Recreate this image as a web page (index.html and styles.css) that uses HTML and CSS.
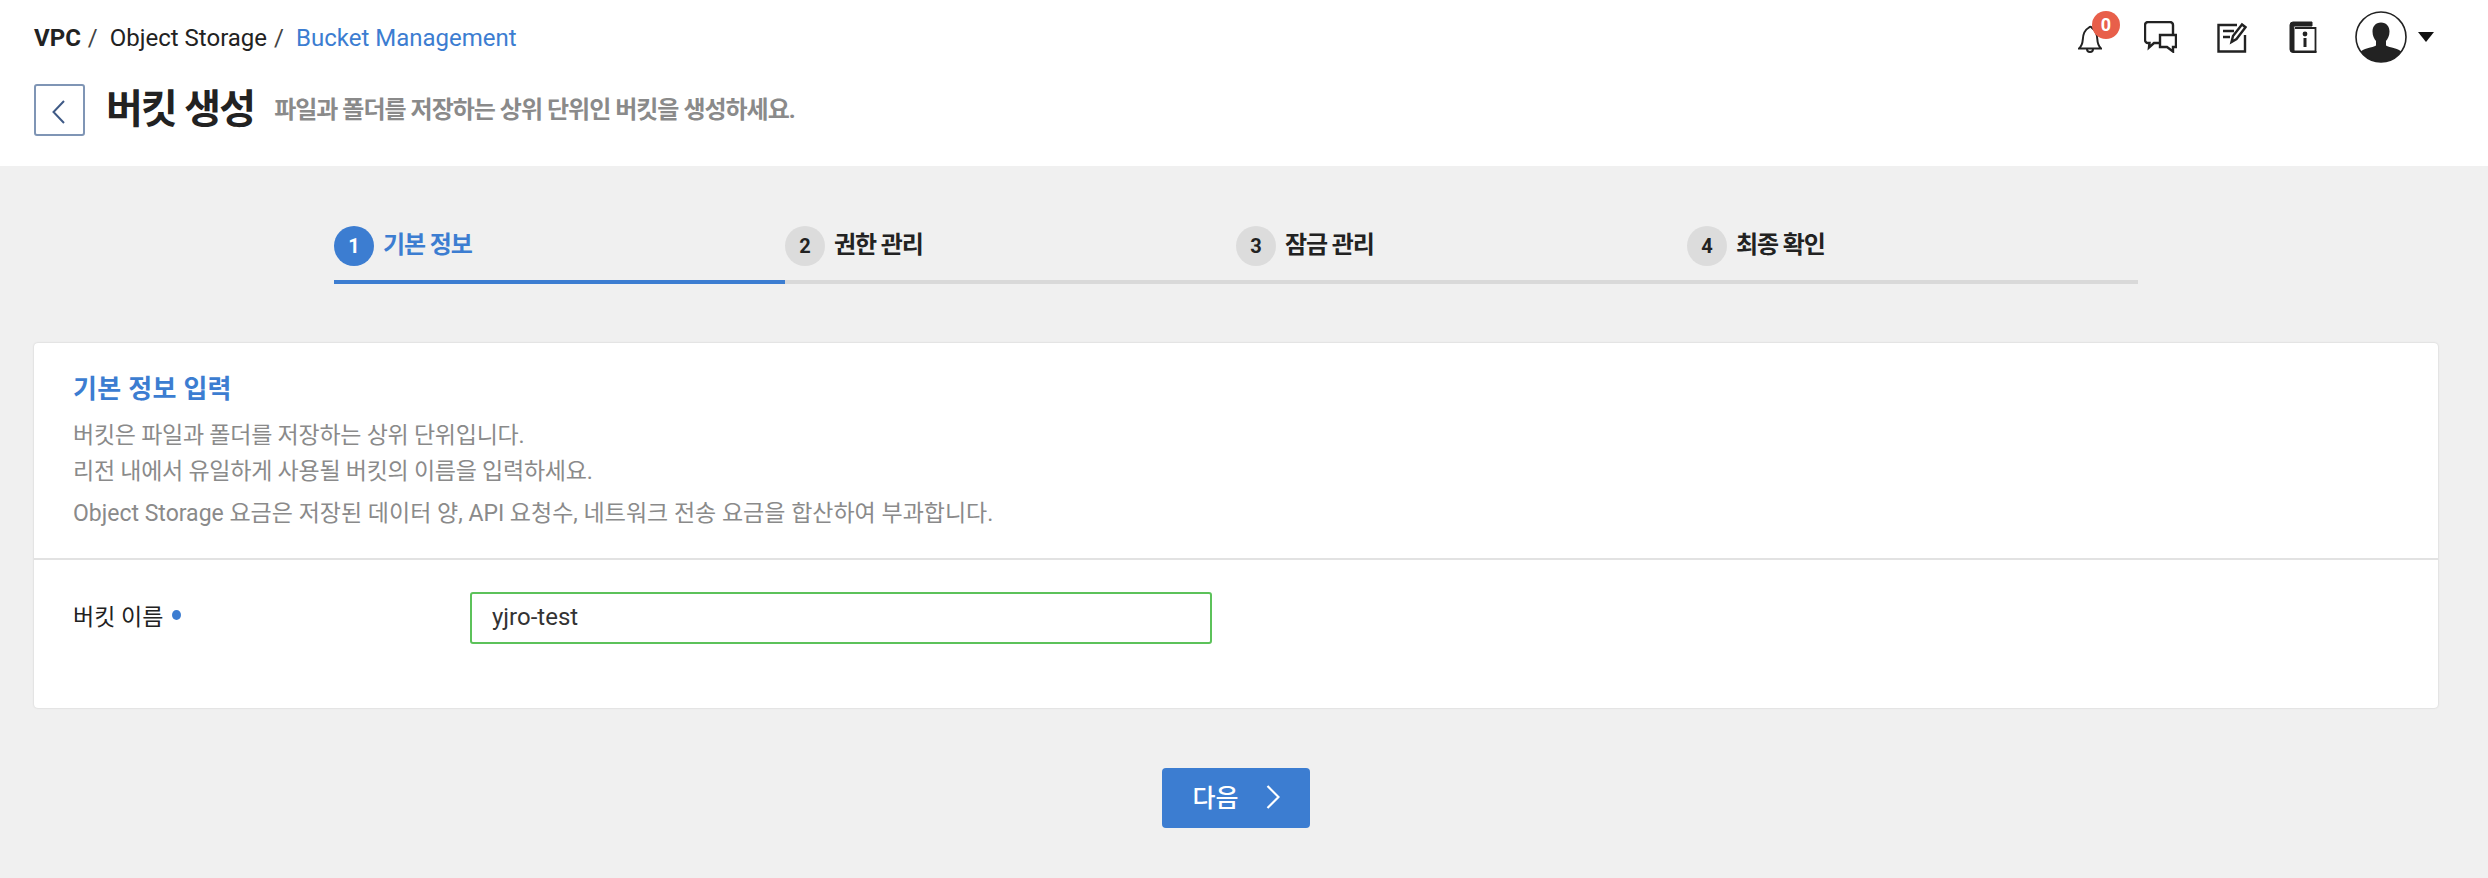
FILE: index.html
```html
<!DOCTYPE html>
<html lang="ko">
<head>
<meta charset="utf-8">
<title>버킷 생성</title>
<link rel="stylesheet" href="styles.css">
</head>
<body>
<header class="header">
  <div class="topbar">
    <nav class="crumbs">
      <span class="crumb-strong">VPC</span><span class="crumb-sep">/</span>
      <span class="crumb">Object Storage</span><span class="crumb-sep">/</span>
      <span class="crumb-active">Bucket Management</span>
    </nav>
    <div class="tools">
      <span class="tool tool-bell">
        <svg width="24" height="28" viewBox="0 0 24 28" fill="none" stroke="#222" stroke-width="2"><path d="M1 23.500c3-2.500 3.500-5 3.800-9C5 9 7.500 4.500 11 2.500 12.500 1 13.500 2 14 3c3 2 5 6 5.300 11 .2 4 1.200 7 3.700 9.500z"/><path d="M9 24a3 3 0 0 0 6 0"/></svg>
        <span class="badge">0</span>
      </span>
      <span class="tool tool-chat">
        <svg width="33" height="32" viewBox="0 0 33 32" fill="none" stroke="#222" stroke-width="2.400"><path d="M16 22H10l-5 4.500 .5-4.500H4a3 3 0 0 1-3-3V4a3 3 0 0 1 3-3h22a3 3 0 0 1 3 3v10"/><path d="M16 14h16v12h-3l0 4.500-6-4.500h-7z"/></svg>
      </span>
      <span class="tool tool-note">
        <svg width="30" height="31" viewBox="0 0 30 31" fill="none" stroke="#222" stroke-width="2.400"><path d="M20 3H1.500v26.500h26.500V13"/><path d="M6 9h11M6 15h7" stroke-width="2.600"/><path d="M14.500 20l1.500-6L25 2.500l3.500 2.700L19.500 17z" fill="#fff"/></svg>
      </span>
      <span class="tool tool-book">
        <svg width="28" height="32" viewBox="0 0 28 32" fill="none"><path d="M4 1h19v4H5a2 2 0 0 0 0 2v22c0 .6 .4 1 1 1h21v1.500H4a3 3 0 0 1-3-3V4a3 3 0 0 1 3-3z" fill="#222" stroke="#222" stroke-width="1"/><path d="M6 7h20.500v24H6" stroke="#222" stroke-width="1.800"/><circle cx="16" cy="13" r="2.400" fill="#222"/><rect x="14.500" y="17" width="3" height="9" fill="#222"/></svg>
      </span>
      <span class="tool-user">
        <svg width="52" height="52" viewBox="0 0 52 52"><defs><clipPath id="avatar-clip"><circle cx="26" cy="26" r="25"/></clipPath></defs><circle cx="26" cy="26" r="25" fill="#fff"/><g clip-path="url(#avatar-clip)" fill="#222"><path d="M26 11.500c5.500 0 8.500 4 8.500 9 0 4-1.700 7.500-3.500 9.500v4.500c3 2 14 3 16 7V52H5V41.500c2-4 13-5 16-7V30c-1.800-2-3.500-5.500-3.500-9.500 0-5 3-9 8.500-9z"/></g><circle cx="26" cy="26" r="25" fill="none" stroke="#222" stroke-width="1.600"/></svg>
        <span class="caret"></span>
      </span>
    </div>
  </div>
  <div class="title-row">
    <button class="back-btn" type="button" aria-label="뒤로">
      <svg class="back-icon" width="13" height="24" viewBox="0 0 13 24" fill="none" stroke="#3f5a86" stroke-width="2"><path d="M12 1L1.500 12 12 23"/></svg>
    </button>
    <h1 class="page-title">버킷 생성</h1>
    <p class="page-sub">파일과 폴더를 저장하는 상위 단위인 버킷을 생성하세요.</p>
  </div>
</header>

<main class="main">
  <ol class="stepper">
    <li class="step step-active"><span class="step-num">1</span><span class="step-label">기본 정보</span></li>
    <li class="step"><span class="step-num">2</span><span class="step-label">권한 관리</span></li>
    <li class="step"><span class="step-num">3</span><span class="step-label">잠금 관리</span></li>
    <li class="step"><span class="step-num">4</span><span class="step-label">최종 확인</span></li>
  </ol>

  <section class="card">
    <div class="card-head">
      <h2 class="card-title">기본 정보 입력</h2>
      <p class="card-desc">버킷은 파일과 폴더를 저장하는 상위 단위입니다.</p>
      <p class="card-desc">리전 내에서 유일하게 사용될 버킷의 이름을 입력하세요.</p>
      <p class="card-desc card-desc-gap">Object Storage 요금은 저장된 데이터 양, API 요청수, 네트워크 전송 요금을 합산하여 부과합니다.</p>
    </div>
    <div class="card-body">
      <label class="field-label" for="bucket-name">버킷 이름<span class="req-dot"></span></label>
      <input class="field-input" id="bucket-name" type="text" value="yjro-test">
    </div>
  </section>

  <div class="actions">
    <button class="next-btn" type="button">
      <span class="next-text">다음</span>
      <svg width="14" height="24" viewBox="0 0 14 24" fill="none" stroke="#fff" stroke-width="2.200"><path d="M1.500 1L12.500 12 1.500 23"/></svg>
    </button>
  </div>
</main>
</body>
</html>
```
FILE: styles.css
```css
* { box-sizing: border-box; }
html, body { margin: 0; padding: 0; }
body {
  width: 2488px;
  height: 878px;
  overflow: hidden;
  background: #f0f0f0;
  color: #222;
  font-family: Roboto, "Noto Sans CJK KR", sans-serif;
}
.header {
  height: 166px;
  background: #fff;
  padding: 0 34px;
}
.topbar {
  height: 76px;
  display: flex;
  justify-content: space-between;
  align-items: center;
}
.crumbs {
  font-size: 24px;
  line-height: 76px;
  white-space: nowrap;
  display: flex;
}
.crumb-strong { font-weight: 700; }
.crumb-sep { margin: 0 12px 0 7px; color: #444; }
.crumb-active { color: #3c7dd1; }
.tools {
  display: flex;
  align-items: center;
  margin: -2px 20px 0 0;
}
.tool { display: block; position: relative; line-height: 0; }
.tool-bell { margin-top: 3px; }
.tool-chat { margin-left: 42px; }
.tool-note { margin-left: 40px; }
.tool-book { margin-left: 42px; }
.tool-user { display: flex; align-items: center; margin-left: 38px; line-height: 0; }
.badge {
  position: absolute;
  left: 14px;
  top: -14px;
  width: 28px;
  height: 28px;
  border-radius: 50%;
  background: #e85f4a;
  color: #fff;
  font-size: 18px;
  font-weight: 700;
  line-height: 28px;
  text-align: center;
}
.caret {
  margin-left: 11px;
  width: 0;
  height: 0;
  border-left: 8px solid transparent;
  border-right: 8px solid transparent;
  border-top: 10px solid #111;
}
.title-row {
  display: flex;
  align-items: center;
  margin-top: 8px;
  height: 52px;
}
.back-btn {
  width: 51px;
  height: 52px;
  padding: 0;
  display: flex;
  align-items: center;
  justify-content: center;
  background: #fff;
  border: 2px solid #7f95b5;
  border-radius: 3px;
}
.back-icon { margin: 3px 2px 0 0; }
.page-title {
  margin: 0 0 0 21px;
  font-size: 40px;
  font-weight: 700;
  line-height: 52px;
  letter-spacing: -1.8px;
  white-space: nowrap;
}
.page-sub {
  margin: 0 0 5px 20px;
  font-size: 24px;
  font-weight: 700;
  color: #8a8a8a;
  white-space: nowrap;
  letter-spacing: -1px;
}
.main { padding: 0 34px; }
.stepper {
  list-style: none;
  margin: 0 0 0 300px;
  padding: 60px 0 0;
  width: 1804px;
  display: flex;
}
.step {
  flex: 1 1 0;
  height: 58px;
  display: flex;
  align-items: flex-start;
  gap: 9px;
  border-bottom: 4px solid #d9d9d9;
}
.step-num {
  width: 40px;
  height: 40px;
  border-radius: 50%;
  background: #dcdcdc;
  color: #222;
  font-size: 20px;
  font-weight: 700;
  line-height: 40px;
  text-align: center;
}
.step-label {
  font-size: 24px;
  font-weight: 700;
  line-height: 38px;
  letter-spacing: -1.1px;
}
.step-active { border-bottom-color: #3c7dd1; }
.step-active .step-num { background: #3c7dd1; color: #fff; }
.step-active .step-label { color: #3c7dd1; }
.card {
  margin-top: 59px;
  width: 2404px;
  height: 365px;
  background: #fff;
  border-radius: 4px;
  box-shadow: 0 0 2px rgba(0, 0, 0, 0.18);
}
.card-head {
  height: 217px;
  padding: 28px 39px 0;
  border-bottom: 2px solid #e2e2e2;
}
.card-title {
  margin: 0 0 11px;
  font-size: 26px;
  font-weight: 700;
  line-height: 36px;
  letter-spacing: 0.3px;
  color: #3c7dd1;
}
.card-desc {
  margin: 0;
  font-size: 23px;
  line-height: 36px;
  letter-spacing: -0.25px;
  color: #8a8a8a;
  white-space: nowrap;
}
.card-desc-gap { margin-top: 6px; letter-spacing: 0; }
.card-body {
  display: flex;
  align-items: center;
  padding: 32px 39px 0;
}
.field-label {
  width: 397px;
  font-size: 23px;
  line-height: 52px;
  color: #222;
  display: flex;
  align-items: center;
}
.req-dot {
  display: inline-block;
  width: 9px;
  height: 10px;
  margin: -6px 0 0 9px;
  border-radius: 50%;
  background: #3c7dd1;
}
.field-input {
  width: 742px;
  height: 52px;
  padding: 0 20px 2px;
  border: 2px solid #5cc25a;
  border-radius: 3px;
  background: #fff;
  color: #333;
  font-family: inherit;
  font-size: 24px;
  outline: none;
}
.actions {
  width: 2404px;
  display: flex;
  justify-content: center;
  padding-top: 60px;
}
.next-btn {
  width: 148px;
  height: 60px;
  padding: 0 0 2px;
  display: flex;
  align-items: center;
  justify-content: center;
  gap: 27px;
  border: 0;
  border-radius: 4px;
  background: #3c7dd1;
  color: #fff;
  font-family: inherit;
  font-size: 25px;
  font-weight: 500;
}
.next-text { margin-bottom: 3px; }
```
